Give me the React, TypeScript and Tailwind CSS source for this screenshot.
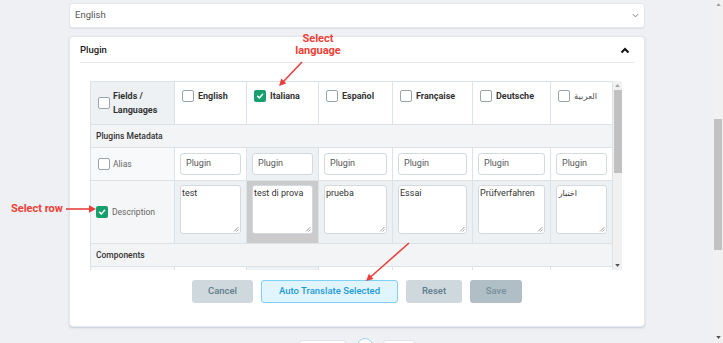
import React from "react";

function Cb({ checked }: { checked?: boolean }) {
  return checked ? (
    <span className="inline-flex w-[12px] h-[12px] shrink-0 items-center justify-center rounded-[2px] bg-[#179f6e]">
      <svg width="8" height="8" viewBox="0 0 10 10">
        <path d="M2 5.3 L4.2 7.4 L8.2 2.8" stroke="white" strokeWidth="1.9" fill="none" strokeLinecap="round" strokeLinejoin="round" />
      </svg>
    </span>
  ) : (
    <span className="inline-block w-[12px] h-[12px] shrink-0 rounded-[2px] border border-[#9aa3ab] bg-white" />
  );
}

const langs = [
  { name: "English", checked: false, alias: "Plugin", desc: "test", rtl: false },
  { name: "Italiana", checked: true, alias: "Plugin", desc: "test di prova", rtl: false },
  { name: "Español", checked: false, alias: "Plugin", desc: "prueba", rtl: false },
  { name: "Française", checked: false, alias: "Plugin", desc: "Essai", rtl: false },
  { name: "Deutsche", checked: false, alias: "Plugin", desc: "Prüfverfahren", rtl: false },
  { name: "العربية", checked: false, alias: "Plugin", desc: "\u0627\u062e\u062a\u0628\u0627\u0631", rtl: true },
];

function TextBox({ text, rtl }: { text: string; rtl: boolean }) {
  return (
    <div className="relative w-full h-[49px] bg-white border border-[#d3d9de] rounded-[3px] pl-[1px] pt-[2px] flex items-start justify-start text-[9px] leading-[11px] text-[#333]">
      {rtl ? (
        <span dir="rtl" className="block w-[19px] shrink-0 text-right whitespace-nowrap text-[8px] font-['DejaVu_Sans',sans-serif]">
          {text}
        </span>
      ) : (
        <span className="inline-block w-fit">{text}</span>
      )}
      <svg width="6" height="6" viewBox="0 0 6 6" className="absolute right-[1px] bottom-[1px]">
        <path d="M5.5 1 L1 5.5 M5.5 3.5 L3.5 5.5" stroke="#8a8a8a" strokeWidth="0.8" fill="none" />
      </svg>
    </div>
  );
}

export default function App() {
  return (
    <div className="w-[723px] h-[343px] overflow-hidden relative flex bg-[#eef0f3] font-['Roboto','DejaVu_Sans',sans-serif] text-[#333]">
      {/* main */}
      <div className="w-[713px] shrink-0">
        <div className="ml-[69px] w-[576px]">
          {/* select */}
          <div className="mt-[3px] h-[25px] bg-white rounded-[3px] border border-[#e3e6ea] shadow-[0_1px_1px_rgba(0,0,0,0.06)] flex items-center justify-between pl-[5px] pr-[5px]">
            <span className="text-[9.5px] text-[#555]">English</span>
            <svg width="7" height="5" viewBox="0 0 8 5">
              <path d="M1 1 L4 4 L7 1" stroke="#777" strokeWidth="1.1" fill="none" />
            </svg>
          </div>

          {/* card */}
          <div className="mt-[8px] h-[291px] bg-white rounded-[4px] border border-[#e4e8ec] shadow-[0_1px_2px_rgba(120,140,160,0.35)] flex flex-col">
            <div className="mx-[10px] h-[26px] border-b border-[#e6e9ec] flex items-center justify-between">
              <span className="text-[9.5px] font-medium text-[#222] leading-none mt-[1px]">Plugin</span>
              <svg width="10" height="7" viewBox="0 0 10 7" className="mr-[4px] mt-[1px]">
                <path d="M1.5 5.5 L5 2 L8.5 5.5" stroke="#111" strokeWidth="2" fill="none" />
              </svg>
            </div>

            {/* table */}
            <div className="ml-[20px] mt-[18px] w-[532px] h-[189px] flex overflow-hidden">
              <div className="w-[523px] h-[189px] overflow-hidden border-t border-l border-[#dde2e7]">
                <div className="grid grid-cols-[84px_72px_72px_74px_80px_78px_62px]">
                  {/* header row */}
                  <div className="h-[43px] bg-[#eef1f4] border-r border-b border-[#dde2e7] flex items-center pl-[7px] gap-[3px]">
                    <Cb />
                    <span className="text-[9px] font-bold leading-[14px] text-[#333]">
                      Fields /<br />Languages
                    </span>
                  </div>
                  {langs.map((l) => (
                    <div key={l.name} className="h-[43px] bg-white border-r border-b border-[#dde2e7] flex items-start pl-[7px] pt-[8px] gap-[4px]">
                      <Cb checked={l.checked} />
                      <span className={"leading-[12px] " + (l.rtl ? "text-[8.5px] font-normal text-[#555]" : "text-[9px] font-bold text-[#333]")}>{l.name}</span>
                    </div>
                  ))}

                  {/* section */}
                  <div className="col-span-7 h-[23px] bg-[#f2f4f6] border-r border-b border-[#dde2e7] flex items-center pl-[5px]">
                    <span className="text-[8.5px] font-medium text-[#333]">Plugins Metadata</span>
                  </div>

                  {/* alias row */}
                  <div className="h-[33px] bg-[#f8f9fa] border-r border-b border-[#dde2e7] flex items-center pl-[7px] gap-[3px]">
                    <Cb />
                    <span className="text-[8.5px] text-[#666]">Alias</span>
                  </div>
                  {langs.map((l, i) => (
                    <div key={l.name} className={"h-[33px] border-r border-b border-[#dde2e7] flex items-center px-[5px] " + (i === 1 ? "bg-[#eef1f3]" : "bg-white")}>
                      <div className="w-full h-[22px] bg-white border border-[#d3d9de] rounded-[3px] flex items-center pl-[5px] text-[9px] text-[#555]">
                        {l.alias}
                      </div>
                    </div>
                  ))}

                  {/* description row */}
                  <div className="h-[63px] bg-[#f5f6f7] border-r border-b border-[#dde2e7] flex items-center pl-[5px] gap-[4px]">
                    <Cb checked />
                    <span className="text-[8.5px] text-[#666]">Description</span>
                  </div>
                  {langs.map((l, i) => (
                    <div key={l.name} className={"h-[63px] border-r border-b border-[#dde2e7] px-[5px] pt-[4px] " + (i === 1 ? "bg-[#cbcbcb]" : "bg-[#eef1f4]")}>
                      <TextBox text={l.desc} rtl={l.rtl} />
                    </div>
                  ))}

                  {/* section */}
                  <div className="col-span-7 h-[23px] bg-[#f2f4f6] border-r border-b border-[#dde2e7] flex items-center pl-[5px]">
                    <span className="text-[8.5px] font-medium text-[#333]">Components</span>
                  </div>

                  {/* partial row */}
                  <div className="h-[20px] bg-[#f8f9fa] border-r border-[#dde2e7]" />
                  {langs.map((l, i) => (
                    <div key={l.name} className={"h-[20px] border-r border-[#dde2e7] " + (i === 1 ? "bg-[#eef1f3]" : "bg-white")} />
                  ))}
                </div>
              </div>
              {/* table scrollbar */}
              <div className="w-[9px] h-[189px] bg-[#f1f1f1] flex flex-col items-center">
                <svg width="5" height="3" viewBox="0 0 6 4" className="mt-[3px]">
                  <path d="M0 4 L3 0 L6 4 Z" fill="#a3a3a3" />
                </svg>
                <div className="mt-[3px] w-[8px] h-[83px] bg-[#c1c1c1]" />
                <div className="flex-1" />
                <svg width="5" height="3" viewBox="0 0 6 4" className="mb-[3px]">
                  <path d="M0 0 L6 0 L3 4 Z" fill="#505050" />
                </svg>
              </div>
            </div>

            {/* buttons */}
            <div className="mt-[10px] flex justify-center gap-[8px] text-[9.5px] font-medium">
              <button className="w-[61px] h-[23px] rounded-[3px] bg-[#cfd8dc] text-[#607d8b]">Cancel</button>
              <button className="w-[137px] h-[23px] rounded-[3px] bg-[#e1f5fe] border border-[#7fd0f5] text-[#1d9ad6]">Auto Translate Selected</button>
              <button className="w-[56px] h-[23px] rounded-[3px] bg-[#cfd8dc] text-[#607d8b]">Reset</button>
              <button className="w-[52px] h-[23px] rounded-[3px] bg-[#b0bec5] text-[#78909c]">Save</button>
            </div>
          </div>

          {/* pagination (cut off) */}
          <div className="mt-[13px] flex items-start">
            <div className="ml-[230px] w-[47px] h-[12px] bg-white border border-[#dfe3e7] rounded-[3px]" />
            <div className="ml-[11px] w-[16px] h-[16px] -mt-[2px] bg-white border border-[#9fd3f2] rounded-full" />
            <div className="ml-[10px] w-[32px] h-[12px] bg-white border border-[#dfe3e7] rounded-[3px]" />
          </div>
        </div>
      </div>

      {/* page scrollbar */}
      <div className="w-[10px] h-[343px] bg-[#f1f1f1] flex flex-col items-center">
        <svg width="5" height="3" viewBox="0 0 6 4" className="mt-[3px]">
          <path d="M0 4 L3 0 L6 4 Z" fill="#a3a3a3" />
        </svg>
        <div className="mt-[113px] w-[8px] h-[131px] bg-[#c1c1c1]" />
        <div className="flex-1" />
        <svg width="5" height="3" viewBox="0 0 6 4" className="mb-[4px]">
          <path d="M0 0 L6 0 L3 4 Z" fill="#505050" />
        </svg>
      </div>

      {/* annotations */}
      <div className="absolute left-[288px] top-[33px] w-[60px] text-center text-[11px] font-bold leading-[12px] text-[#ee4036]">
        Select
        <br />
        language
      </div>
      <div className="absolute left-[11px] top-[202px] text-[11px] font-bold leading-[14px] text-[#ee4036]">Select row</div>
      <svg className="absolute left-0 top-0 pointer-events-none" width="723" height="343" viewBox="0 0 723 343">
        <g stroke="#e8413c" strokeWidth="1.6" fill="none">
          <line x1="302" y1="62" x2="283" y2="82" />
          <line x1="66" y1="209" x2="90" y2="209" />
          <line x1="409" y1="243" x2="370" y2="277.5" />
        </g>
        <g fill="#e8413c">
          <polygon points="279,86 286.3,83.4 281.3,78.5" />
          <polygon points="96,209 89,205.3 89,212.7" />
          <polygon points="366,281 373.5,279 368.9,273.8" />
        </g>
      </svg>
    </div>
  );
}
